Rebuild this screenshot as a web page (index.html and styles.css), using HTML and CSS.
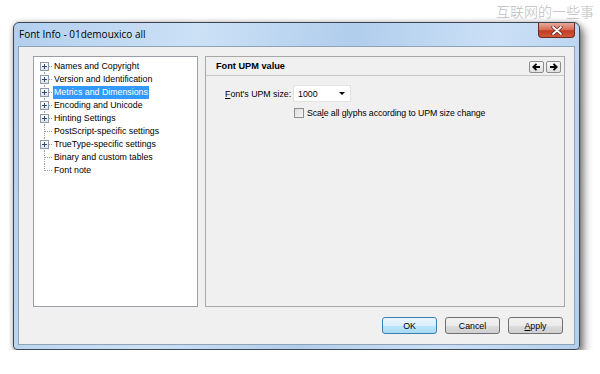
FILE: index.html
```html
<!DOCTYPE html>
<html lang="en">
<head>
  <meta charset="UTF-8" />
  <title>Font Info</title>
  <link rel="stylesheet" href="styles.css">
</head>
<body>
  <div class="watermark">互联网的一些事</div>

  <div class="window">
    <div class="titlebar">
      <span class="title">Font Info - 01demouxico all</span>
      <div class="close">
        <svg width="12" height="9" viewBox="0 0 12 9">
          <path d="M2 1 L10 8 M10 1 L2 8" stroke="#5a2018" stroke-width="3.2" stroke-linecap="round"/>
          <path d="M2 1 L10 8 M10 1 L2 8" stroke="#fff" stroke-width="1.8" stroke-linecap="round"/>
        </svg>
      </div>
    </div>

    <div class="client">
      <div class="panels">
        <ul class="tree">
          <li class="item first"><span class="twig"><span class="box"></span></span><span class="label">Names and Copyright</span></li>
          <li class="item"><span class="twig"><span class="box"></span></span><span class="label">Version and Identification</span></li>
          <li class="item"><span class="twig"><span class="box"></span></span><span class="label selected">Metrics and Dimensions</span></li>
          <li class="item"><span class="twig"><span class="box"></span></span><span class="label">Encoding and Unicode</span></li>
          <li class="item"><span class="twig"><span class="box"></span></span><span class="label">Hinting Settings</span></li>
          <li class="item"><span class="twig"></span><span class="label">PostScript-specific settings</span></li>
          <li class="item"><span class="twig"><span class="box"></span></span><span class="label">TrueType-specific settings</span></li>
          <li class="item"><span class="twig"></span><span class="label">Binary and custom tables</span></li>
          <li class="item last"><span class="twig"></span><span class="label">Font note</span></li>
        </ul>

        <div class="page">
          <div class="page-head">
            <span class="page-title">Font UPM value</span>
            <div class="nav">
              <span class="nav-btn">
                <svg width="9" height="8" viewBox="0 0 9 8"><path d="M1 4 H8 M4.5 0.8 L1.2 4 L4.5 7.2" stroke="#000" stroke-width="1.8" fill="none"/></svg>
              </span>
              <span class="nav-btn">
                <svg width="9" height="8" viewBox="0 0 9 8"><path d="M1 4 H8 M4.5 0.8 L7.8 4 L4.5 7.2" stroke="#000" stroke-width="1.8" fill="none"/></svg>
              </span>
            </div>
          </div>

          <div class="form">
            <div class="row">
              <label class="field-label"><u>F</u>ont's UPM size:</label>
              <div class="select"><span>1000</span><span class="caret"></span></div>
            </div>
            <div class="row check-row">
              <span class="checkbox"></span>
              <span class="check-label">Sca<u>l</u>e all glyphs according to UPM size change</span>
            </div>
          </div>
        </div>
      </div>

      <div class="actions">
        <button class="btn default">OK</button>
        <button class="btn">Cancel</button>
        <button class="btn"><u>A</u>pply</button>
      </div>
    </div>
  </div>
</body>
</html>
```

FILE: styles.css
```css
body {
  margin: 0;
  background: #fff;
  font-family: 'Liberation Sans', Arial, sans-serif;
  font-size: 8.8px;
  color: #000;
}
.watermark {
  height: 22px;
  line-height: 22px;
  text-align: right;
  padding-right: 6px;
  font-family: 'Noto Sans CJK SC', sans-serif;
  font-size: 14px;
  font-weight: 300;
  color: #bdbdbd;
}
.window {
  box-sizing: border-box;
  margin-left: 13px;
  width: 567px;
  height: 328px;
  border: 1px solid #3e454e;
  border-radius: 6px 6px 4px 4px;
  background: linear-gradient(100deg, #b3cfee 0%, #cce1f6 30%, #b1cdec 55%, #cbe0f6 78%, #b3cfee 100%);
  box-shadow: 4px 5px 8px rgba(0,0,0,0.5), 0 0 5px rgba(0,0,0,0.25);
}
.titlebar {
  height: 23px;
  display: flex;
  justify-content: space-between;
  align-items: flex-start;
}
.title {
  font-family: 'Open Sans', sans-serif;
  font-size: 10px;
  line-height: 23px;
  padding-left: 5px;
}
.close {
  box-sizing: border-box;
  width: 37px;
  height: 15px;
  margin-right: 4px;
  border: 1px solid #6b2b22;
  border-top: none;
  border-radius: 0 0 4px 4px;
  background: linear-gradient(#e9a99b, #d66a55 50%, #c13b22 55%, #d2583a);
  display: flex;
  justify-content: center;
  align-items: center;
}
.client {
  box-sizing: border-box;
  margin: 0 4px 4px 4px;
  height: 299px;
  border: 1px solid #8ea3b8;
  background: #f0f0f0;
  padding: 9px 9px 0 14px;
}
.panels {
  display: flex;
  gap: 7px;
  height: 251px;
}
.tree {
  box-sizing: border-box;
  width: 165px;
  margin: 0;
  padding: 3px 0 0 0;
  list-style: none;
  background: #fff;
  border: 1px solid #9a9ea6;
}
.item {
  display: flex;
  height: 13px;
  line-height: 13px;
}
.twig {
  position: relative;
  flex: none;
  width: 19px;
  height: 13px;
}
.twig::before {
  content: "";
  position: absolute;
  left: 10px;
  top: 0;
  bottom: 0;
  border-left: 1px dotted #a0a0a0;
}
.first .twig::before { top: 6px; }
.last .twig::before { bottom: 6px; }
.twig::after {
  content: "";
  position: absolute;
  left: 10px;
  width: 8px;
  top: 6px;
  border-top: 1px dotted #a0a0a0;
}
.box {
  position: absolute;
  z-index: 1;
  box-sizing: border-box;
  left: 6px;
  top: 2px;
  width: 9px;
  height: 9px;
  border: 1px solid #8f9aa8;
  background: linear-gradient(#fff, #dde3ea);
}
.box::before, .box::after {
  content: "";
  position: absolute;
  background: #2d4a75;
}
.box::before { left: 1px; top: 3px; width: 5px; height: 1px; }
.box::after { left: 3px; top: 1px; width: 1px; height: 5px; }
.label {
  padding: 0 1px;
  white-space: nowrap;
}
.selected {
  background: #3399ff;
  color: #fff;
}
.page {
  box-sizing: border-box;
  width: 360px;
  border: 1px solid #a8a8a8;
  background: #f0f0f0;
}
.page-head {
  height: 18px;
  border-bottom: 1px solid #c8c8c8;
  display: flex;
  justify-content: space-between;
  align-items: center;
  padding: 0 3px 0 10px;
}
.page-title {
  font-weight: bold;
  font-size: 9.2px;
}
.nav {
  display: flex;
  gap: 2px;
  margin-top: 2px;
}
.nav-btn {
  box-sizing: border-box;
  width: 15px;
  height: 12px;
  border: 1px solid #8c8c8c;
  border-radius: 2px;
  background: linear-gradient(#fafafa, #dedede);
  display: flex;
  justify-content: center;
  align-items: center;
}
.form {
  padding: 9px 0 0 19px;
}
.row {
  display: flex;
  align-items: center;
}
.field-label {
  width: 68px;
}
.select {
  box-sizing: border-box;
  width: 58px;
  height: 17px;
  background: #fff;
  border: 1px solid #e2e2e2;
  display: flex;
  justify-content: space-between;
  align-items: center;
  padding: 0 5px 0 4px;
}
.caret {
  width: 0;
  height: 0;
  border-left: 3px solid transparent;
  border-right: 3px solid transparent;
  border-top: 3px solid #000;
}
.check-row {
  margin-top: 6px;
  padding-left: 69px;
  gap: 3px;
}
.check-label {
  letter-spacing: -0.1px;
}
.checkbox {
  box-sizing: border-box;
  width: 10px;
  height: 10px;
  border: 1px solid #8e8f8f;
  background: linear-gradient(135deg, #dcdcdc, #f6f6f6);
}
.actions {
  display: flex;
  justify-content: flex-end;
  gap: 8px;
  margin-top: 10px;
  padding-right: 2px;
}
.btn {
  box-sizing: border-box;
  width: 55px;
  height: 17px;
  padding: 0;
  border: 1px solid #707070;
  border-radius: 3px;
  background: linear-gradient(#f2f2f2, #ebebeb 50%, #dddddd 51%, #cfcfcf);
  font-family: 'Liberation Sans', Arial, sans-serif;
  font-size: 8.8px;
  color: #000;
}
.btn.default {
  border-color: #3c7fb1;
  background: linear-gradient(#eaf6fd, #d9f0fc 50%, #bee6fd 51%, #a7d9f5);
}
```
